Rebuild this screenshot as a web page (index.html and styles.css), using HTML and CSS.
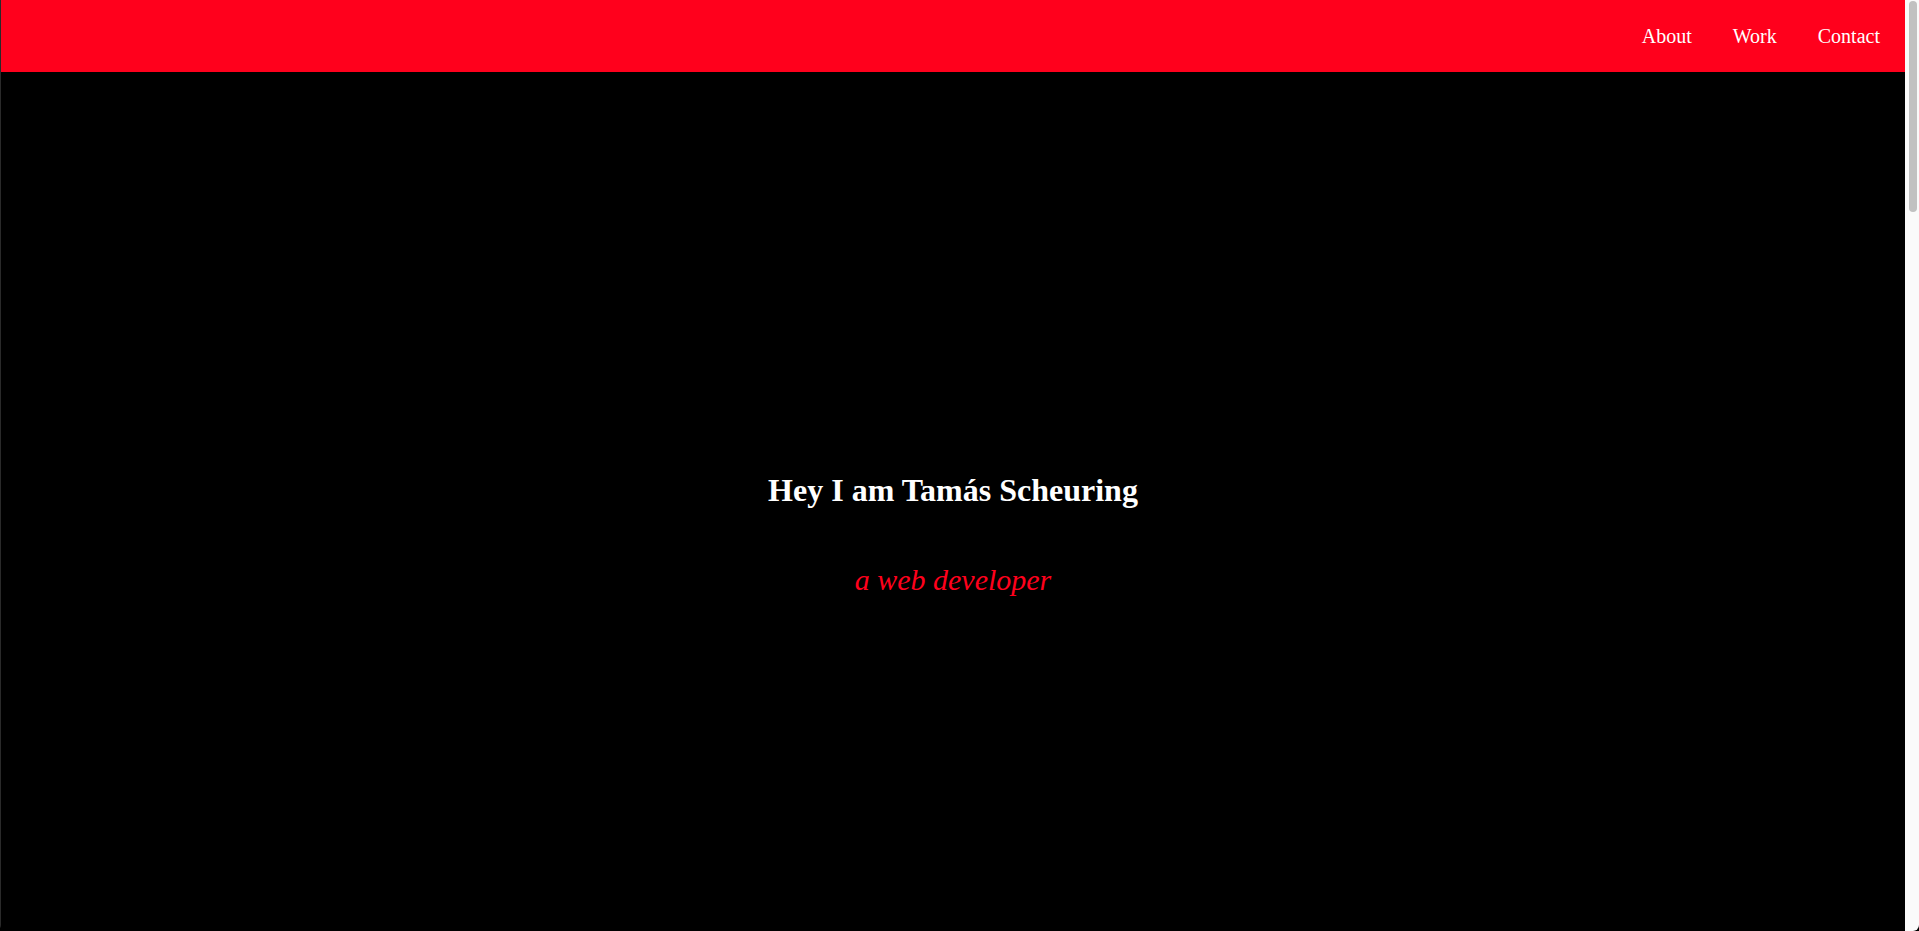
FILE: index.html
```html
<!DOCTYPE html>
<html lang="en">
<head>
<meta charset="utf-8">
<title>Tamás Scheuring</title>
<link rel="stylesheet" href="styles.css">
</head>
<body>
  <div class="viewport">
    <header class="topbar">
      <nav class="nav">
        <a class="nav-link" href="#about">About</a>
        <a class="nav-link" href="#work">Work</a>
        <a class="nav-link" href="#contact">Contact</a>
      </nav>
    </header>
    <main>
      <section class="hero">
        <h1 class="hero-title">Hey I am Tamás Scheuring</h1>
        <p class="hero-sub">a web developer</p>
      </section>
      <section class="section" id="about"></section>
      <section class="section" id="work"></section>
      <section class="section" id="contact"></section>
    </main>
  </div>
  <div class="scrollbar" aria-hidden="true">
    <div class="scrollbar-thumb"></div>
  </div>
</body>
</html>
```
FILE: styles.css
```css
html {
  height: 100%;
  background: #000;
}

body {
  margin: 0;
  height: 100%;
  display: flex;
  overflow: hidden;
  border-radius: 0 0 6px 6px;
  background: #000;
  font-family: "Liberation Serif", "Times New Roman", serif;
}

.viewport {
  flex: 1;
  min-width: 0;
  overflow: hidden;
  border-left: 1px solid #2a2a2a;
}

.topbar {
  height: 72px;
  background: #ff001c;
  display: flex;
  justify-content: flex-end;
  align-items: center;
}

.nav {
  display: flex;
  gap: 41px;
  padding-right: 25px;
  padding-top: 1px;
}

.nav-link {
  color: #fff;
  text-decoration: none;
  font-size: 20px;
}

.hero {
  height: 100vh;
  background: #000;
  display: flex;
  flex-direction: column;
  justify-content: center;
  align-items: center;
}

.hero-title {
  color: #fff;
  font-size: 32px;
  font-weight: bold;
  margin: 21.44px 0;
}

.hero-sub {
  color: #ff001c;
  font-size: 30px;
  font-style: italic;
  margin: 33px 0 27px;
}

.section {
  height: 1028px;
  background: #000;
}

.scrollbar {
  width: 14px;
  flex: none;
  background: #fafafa;
  padding: 1px 2px 0 4px;
  box-sizing: border-box;
}

.scrollbar-thumb {
  width: 8px;
  height: 211px;
  border-radius: 4px;
  background: #c1c1c1;
}
```
